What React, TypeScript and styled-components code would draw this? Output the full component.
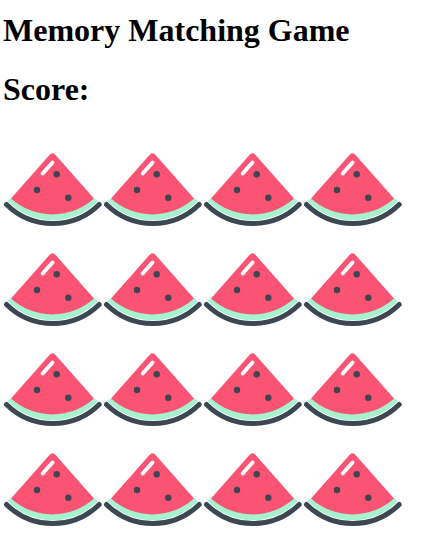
import styled, { createGlobalStyle } from 'styled-components'

const GlobalStyle = createGlobalStyle`
    html, body {
        margin: 0;
        padding: 0;
        background: #fff;
    }
    body {
        font-family: "Liberation Serif", "Times New Roman", serif;
        color: #000;
    }
`

const cards = Array.from({ length: 16 }, (_, i) => i)

function Watermelon(): JSX.Element {
    return (
        <CardIcon viewBox="0 0 100 100">
            <path d="M4.5 61 A63 63 0 0 0 95 61 L91 58 L8.3 58 Z" fill="#a6f2cf" />
            <path
                d="M46 15.5 Q49.5 11 53 15.5 L91 58.5 A62 62 0 0 1 8 58.5 Z"
                fill="#fb5373"
            />
            <path d="M3.5 64.5 A66 66 0 0 0 96.2 64.5" fill="none" stroke="#3c4752" strokeWidth="5" strokeLinecap="round" />
            <line x1="49.5" y1="22.5" x2="39.7" y2="33.5" stroke="#fff" strokeWidth="4" strokeLinecap="round" />
            <circle cx="53.7" cy="34.3" r="3.2" fill="#3f4450" />
            <circle cx="34" cy="50" r="3.2" fill="#3f4450" />
            <circle cx="65.3" cy="57.7" r="3.2" fill="#3f4450" />
        </CardIcon>
    )
}

export default function App(): JSX.Element {
    return (
        <Page>
            <GlobalStyle />
            <Title>Memory Matching Game</Title>
            <Score>Score:</Score>
            <Board>
                {cards.map((card) => (
                    <Watermelon key={card} />
                ))}
            </Board>
        </Page>
    )
}

const Page = styled.div`
    padding: 0 3px;
`

const Title = styled.h1`
    margin: 0;
    padding-top: 12px;
    font-size: 32px;
    line-height: 37px;
    font-weight: 700;
`

const Score = styled.h2`
    margin: 0;
    padding-top: 22px;
    font-size: 32px;
    line-height: 37px;
    font-weight: 700;
`

const Board = styled.div`
    display: grid;
    grid-template-columns: repeat(4, 100px);
    grid-auto-rows: 100px;
    margin-top: 32px;
`

const CardIcon = styled.svg`
    display: block;
    width: 100px;
    height: 100px;
`
